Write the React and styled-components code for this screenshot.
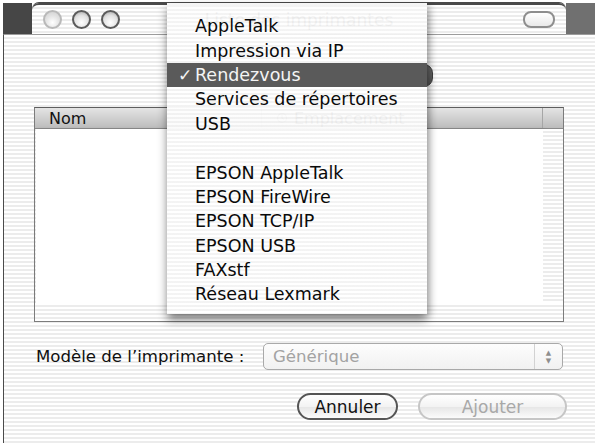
import React from 'react';
import styled, {createGlobalStyle} from 'styled-components';

const GlobalStyle = createGlobalStyle`
  html, body {
    margin: 0;
    padding: 0;
    background: #ffffff;
  }
  body {
    font-family: "DejaVu Sans", "Liberation Sans", sans-serif;
  }
`

const stripes = `repeating-linear-gradient(to bottom, #ffffff 0px, #ffffff 2px, #ececec 2px, #ececec 4px)`
const menuStripes = `repeating-linear-gradient(to bottom, rgba(255,255,255,0.95) 0px, rgba(255,255,255,0.95) 2px, rgba(243,243,243,0.95) 2px, rgba(243,243,243,0.95) 4px)`

const Page = styled.div`
  position: relative;
  width: 595px;
  height: 448px;
  padding: 3px 0 0 3px;
  box-sizing: border-box;
  overflow: hidden;
`

const Window = styled.div`
  display: flex;
  flex-direction: column;
  width: 592px;
  height: 440px;
`

const TitleRow = styled.div`
  display: flex;
  height: 31px;
`

const Corner = styled.div`
  width: 29px;
  background: ${props => props.tone};
`

const TitleTab = styled.div`
  flex: 1;
  display: grid;
  grid-template-columns: 1fr auto 1fr;
  align-items: center;
  padding: 0 11px;
  border-top: 2px solid #4a4a4a;
  border-radius: 7px 7px 0 0;
  background: ${stripes};
  box-shadow: 0 -1px 0 #4a4a4a;
`

const Lights = styled.div`
  display: flex;
  gap: 10px;
`

const Light = styled.div`
  width: 19px;
  height: 19px;
  box-sizing: border-box;
  border-radius: 50%;
  border: 2px solid ${props => props.dim ? "#b9b9b9" : "#5c5c5c"};
  background: radial-gradient(circle at 50% 70%, #ffffff 0%, #e2e2e2 55%, ${props => props.dim ? "#cfcfcf" : "#a2a2a2"} 100%);
`

const Title = styled.div`
  font-size: 17px;
  color: #333;
`

const ToolbarPill = styled.div`
  justify-self: end;
  width: 28px;
  height: 13px;
  border: 2px solid #8e8e8e;
  border-radius: 8px;
  background: linear-gradient(#ffffff, #e9e9e9);
`

const Body = styled.div`
  flex: 1;
  display: flex;
  flex-direction: column;
  padding-top: 29px;
  border-left: 1px solid #4a4a4a;
  border-top: 1px solid #9c9c9c;
  background: ${stripes};
`

const PopupRow = styled.div`
  display: flex;
  padding-left: 166px;
`

const PopupButton = styled.div`
  width: 263px;
  height: 23px;
  box-sizing: border-box;
  border: 1px solid #3e3e3e;
  border-radius: 5px 9px 9px 5px;
  background: linear-gradient(#6a6a6a, #545454);
`

const Table = styled.div`
  display: flex;
  flex-direction: column;
  margin: 20px 0 0 30px;
  width: 530px;
  height: 215px;
  box-sizing: border-box;
  border: 1px solid #7c7c7c;
  border-top-color: #5e5e5e;
`

const Header = styled.div`
  display: flex;
  height: 21px;
  box-sizing: border-box;
  border-bottom: 1px solid #8a8a8a;
  background: linear-gradient(to bottom, #e4e4e4 0%, #d0d0d0 50%, #bcbcbc 100%);
`

const HeadCell = styled.div`
  display: flex;
  align-items: center;
  gap: 6px;
  width: ${props => props.w ? props.w + "px" : "auto"};
  flex: ${props => props.w ? "none" : "1"};
  padding-left: ${props => props.pad || 0}px;
  box-sizing: border-box;
  font-size: 16px;
  color: #111;
  border-right: ${props => props.last ? "none" : "1px solid #a6a6a6"};
`

const ListArea = styled.div`
  display: flex;
  height: 174px;
`

const ListBody = styled.div`
  flex: 1;
  margin-left: 1px;
  background: #ffffff;
  box-shadow: 2px 2px 4px rgba(0, 0, 0, 0.28);
`

const ScrollTrack = styled.div`
  width: 20px;
  background: ${stripes};
`

const BottomTrack = styled.div`
  flex: 1;
  background: ${stripes};
`

const FormRow = styled.div`
  display: flex;
  align-items: center;
  justify-content: space-between;
  height: 27px;
  margin-top: 21px;
  padding: 0 32px 0 32px;
`

const Label = styled.span`
  font-size: 16.6px;
  color: #111;
`

const Select = styled.div`
  display: flex;
  width: 300px;
  height: 27px;
  box-sizing: border-box;
  border: 1px solid #a9a9a9;
  border-radius: 5px;
  background: linear-gradient(#fdfdfd, #f1f1f1);
`

const SelectText = styled.div`
  flex: 1;
  display: flex;
  align-items: center;
  padding-left: 9px;
  font-size: 16.6px;
  color: #a3a3a3;
`

const SelectArrows = styled.div`
  width: 27px;
  display: flex;
  flex-direction: column;
  align-items: center;
  justify-content: center;
  border-left: 1px solid #d2d2d2;
  font-size: 7px;
  line-height: 8px;
  color: #8e8e8e;
`

const ButtonRow = styled.div`
  display: flex;
  justify-content: flex-end;
  gap: 20px;
  margin-top: 23px;
  padding-right: 28px;
`

const PillButton = styled.div`
  display: flex;
  align-items: center;
  justify-content: center;
  width: ${props => props.w}px;
  height: 27px;
  box-sizing: border-box;
  border-radius: 14px;
  border: 2px solid ${props => props.disabled ? "#c6c6c6" : "#555555"};
  background: linear-gradient(#ffffff 0%, #f3f3f3 50%, #e6e6e6 52%, #fbfbfb 100%);
  font-size: 17px;
  color: ${props => props.disabled ? "#a8a8a8" : "#111111"};
`

const Menu = styled.div`
  position: absolute;
  left: 167px;
  top: 3px;
  width: 260px;
  height: 311px;
  box-sizing: border-box;
  padding: 11px 0 9px;
  background: ${menuStripes};
  box-shadow: 0 6px 9px rgba(0, 0, 0, 0.45), 4px 2px 6px rgba(0, 0, 0, 0.12);
`

const MenuItem = styled.div`
  display: flex;
  align-items: center;
  height: 24.4px;
  padding-left: 11px;
  font-size: 17.5px;
  color: ${props => props.selected ? "#f4f4f4" : "#0a0a0a"};
  background: ${props => props.selected ? "#5a5a5a" : "transparent"};
`

const Check = styled.span`
  width: 17px;
  font-size: 17px;
  font-weight: bold;
`

const ColumnIcon = () => (
    <svg width="12" height="12" viewBox="0 0 12 12">
        <circle cx="6" cy="6" r="4.5" fill="none" stroke="#777" strokeWidth="1.2"/>
        <path d="M6 3v3l2 1.5" fill="none" stroke="#777" strokeWidth="1.2"/>
    </svg>
)

const items = [
    "AppleTalk",
    "Impression via IP",
    "Rendezvous",
    "Services de répertoires",
    "USB",
    "",
    "EPSON AppleTalk",
    "EPSON FireWire",
    "EPSON TCP/IP",
    "EPSON USB",
    "FAXstf",
    "Réseau Lexmark",
]

const App = () => {
    return (
        <Page>
            <GlobalStyle/>
            <Window>
                <TitleRow>
                    <Corner tone="#464646"/>
                    <TitleTab>
                        <Lights>
                            <Light dim/>
                            <Light/>
                            <Light/>
                        </Lights>
                        <Title>Liste des imprimantes</Title>
                        <ToolbarPill/>
                    </TitleTab>
                    <Corner tone="#707070"/>
                </TitleRow>
                <Body>
                    <PopupRow>
                        <PopupButton/>
                    </PopupRow>
                    <Table>
                        <Header>
                            <HeadCell w={227} pad={14}>Nom</HeadCell>
                            <HeadCell pad={14}><ColumnIcon/>Emplacement</HeadCell>
                            <HeadCell w={20} last/>
                        </Header>
                        <ListArea>
                            <ListBody/>
                            <ScrollTrack/>
                        </ListArea>
                        <BottomTrack/>
                    </Table>
                    <FormRow>
                        <Label>Modèle de l’imprimante :</Label>
                        <Select>
                            <SelectText>Générique</SelectText>
                            <SelectArrows>
                                <span>▲</span>
                                <span>▼</span>
                            </SelectArrows>
                        </Select>
                    </FormRow>
                    <ButtonRow>
                        <PillButton w={101}>Annuler</PillButton>
                        <PillButton w={149} disabled>Ajouter</PillButton>
                    </ButtonRow>
                </Body>
            </Window>
            <Menu>
                {items.map((item, i) => (
                    <MenuItem key={i} selected={item === "Rendezvous"}>
                        <Check>{item === "Rendezvous" ? "✓" : ""}</Check>
                        {item}
                    </MenuItem>
                ))}
            </Menu>
        </Page>
    );
};

export default App;
